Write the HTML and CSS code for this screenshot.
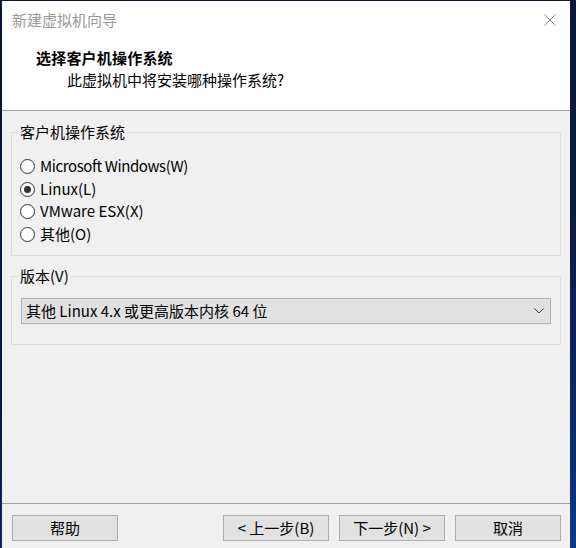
FILE: index.html
```html
<!DOCTYPE html>
<html lang="zh-CN">
<head>
<meta charset="utf-8">
<title>新建虚拟机向导</title>
<link rel="stylesheet" href="styles.css">
</head>
<body>
<div class="window">
  <div class="header">
    <div class="titlebar">
      <span class="title">新建虚拟机向导</span>
      <svg class="close" width="12" height="12" viewBox="0 0 12 12"><path d="M0.5 0.5 L11.5 11.5 M11.5 0.5 L0.5 11.5" stroke="#8a8a8a" stroke-width="1" fill="none"/></svg>
    </div>
    <div class="heading">选择客户机操作系统</div>
    <div class="subheading">此虚拟机中将安装哪种操作系统?</div>
  </div>
  <div class="content">
    <fieldset class="group group-os">
      <legend>客户机操作系统</legend>
      <div class="radios">
        <div class="radio-row"><span class="radio"></span><span class="label tight">Microsoft Windows(W)</span></div>
        <div class="radio-row"><span class="radio checked"></span><span class="label">Linux(L)</span></div>
        <div class="radio-row"><span class="radio"></span><span class="label">VMware ESX(X)</span></div>
        <div class="radio-row"><span class="radio"></span><span class="label">其他(O)</span></div>
      </div>
    </fieldset>
    <fieldset class="group group-ver">
      <legend>版本(V)</legend>
      <div class="select">
        <span>其他 Linux 4.x 或更高版本内核 64 位</span>
        <svg class="chev" width="10" height="6" viewBox="0 0 10 6"><path d="M0.5 0.5 L5 5 L9.5 0.5" stroke="#3c3c3c" stroke-width="1" fill="none"/></svg>
      </div>
    </fieldset>
  </div>
  <div class="footer">
    <div class="btn">帮助</div>
    <div class="spacer"></div>
    <div class="btn">&lt; 上一步(B)</div>
    <div class="btn">下一步(N) &gt;</div>
    <div class="btn">取消</div>
  </div>
</div>
</body>
</html>
```

FILE: styles.css
```css
html, body {
  margin: 0;
  padding: 0;
  height: 548px;
  overflow: hidden;
}
body {
  background: linear-gradient(160deg, #0b1532 0%, #0c1a3e 55%, #0a2c6e 85%, #0b3b8c 100%);
  font-family: "Noto Sans CJK SC", "Noto Sans", sans-serif;
  font-size: 15px;
  color: #000;
}
.window {
  margin: 1px 6px 0 2px;
  height: 547px;
  background: #f0f0f0;
  display: flex;
  flex-direction: column;
}
.header {
  background: #fff;
  height: 109px;
  border-bottom: 1px solid #a0a0a0;
  display: flex;
  flex-direction: column;
  flex: none;
}
.titlebar {
  height: 38px;
  display: flex;
  align-items: center;
  justify-content: space-between;
  padding: 0 14px 0 10px;
}
.title {
  color: #999;
  font-size: 15px;
  line-height: 20px;
}
.close {
  display: block;
}
.heading {
  font-weight: bold;
  font-size: 15px;
  line-height: 20px;
  margin: 9px 0 0 34px;
  letter-spacing: 0.2px;
}
.subheading {
  font-size: 15px;
  line-height: 20px;
  margin: 2px 0 0 65px;
}
.content {
  flex: 1;
  display: flex;
  flex-direction: column;
  padding-top: 11px;
}
.group {
  margin: 0 9px;
  padding: 0;
  border: 1px solid #dcdcdc;
  min-width: 0;
}
.group legend {
  margin-left: 6px;
  padding: 0 2px;
  line-height: 20px;
  font-size: 15px;
}
.radios {
  display: flex;
  flex-direction: column;
  padding: 13px 0 10px 8px;
}
.radio-row {
  height: 22.5px;
  display: flex;
  align-items: center;
  gap: 5px;
  line-height: 20px;
}
.label.tight {
  letter-spacing: -0.4px;
}
.radio {
  width: 13px;
  height: 13px;
  border: 1px solid #333;
  border-radius: 50%;
  background: #fff;
  box-sizing: content-box;
  position: relative;
  flex: none;
  margin-top: 1px;
}
.radio.checked::after {
  content: "";
  position: absolute;
  left: 3px;
  top: 3px;
  width: 7px;
  height: 7px;
  border-radius: 50%;
  background: #333;
}
.group-ver {
  margin-top: 10px;
}
.select {
  margin: 12px 9px 20px 9px;
  height: 24px;
  border: 1px solid #adb2b5;
  background: #e1e1e1;
  display: flex;
  align-items: center;
  justify-content: space-between;
  padding: 0 6px 0 4px;
  line-height: 20px;
}
.chev {
  display: block;
}
.footer {
  box-sizing: border-box;
  height: 45px;
  flex: none;
  border-top: 1px solid #a0a0a0;
  display: flex;
  align-items: flex-start;
  padding: 11px 9px 0 10px;
  gap: 10px;
}
.spacer {
  flex: 1;
}
.btn {
  width: 104px;
  height: 24px;
  border: 1px solid #adadad;
  background: #e1e1e1;
  display: flex;
  align-items: center;
  justify-content: center;
  font-size: 15px;
  line-height: 20px;
}
```
